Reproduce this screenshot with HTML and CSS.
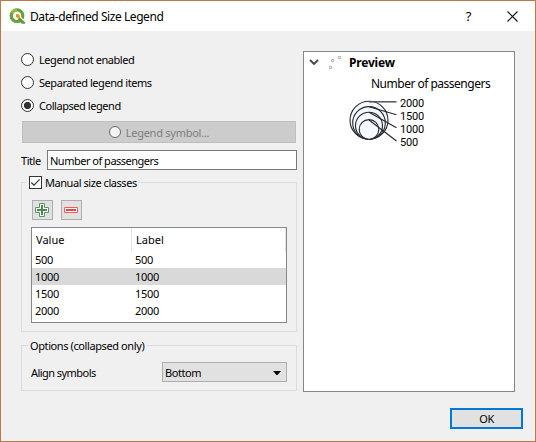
FILE: index.html
```html
<!DOCTYPE html>
<html lang="en">
<head>
<meta charset="utf-8">
<title>Data-defined Size Legend</title>
<link rel="stylesheet" href="styles.css">
</head>
<body>
<div class="dialog">
  <header class="titlebar">
    <svg class="logo" width="17" height="17" viewBox="0 0 17 17">
      <circle cx="8" cy="7.7" r="5.8" fill="none" stroke="#64a338" stroke-width="3.2"/>
      <path d="M3 4.8A5.8 5.8 0 0 1 8 1.9" fill="none" stroke="#8fbd45" stroke-width="2.6"/>
      <path d="M7 6.3h3l1.5 2 4.8 5v2.5h-3L7.6 9.5z" fill="#fff"/>
      <path d="M10 8.8l6 5.4v1.6h-3.2L9 11.4z" fill="#5c9d39"/>
      <path d="M7 6.2h3.2l.6 2.8-2 1.2L7 9z" fill="#ef8a2b"/>
    </svg>
    <h1 class="caption">Data-defined Size Legend</h1>
    <span class="help">?</span>
    <svg class="close" width="11" height="11" viewBox="0 0 11 11"><path d="M.5.5l10 10M10.500 .5l-10 10" stroke="#111" stroke-width="1.1"/></svg>
  </header>
  <main class="content">
    <section class="settings">
      <div class="radios">
        <label class="radio"><i class="dot"></i><span>Legend not enabled</span></label>
        <label class="radio"><i class="dot"></i><span>Separated legend items</span></label>
        <label class="radio"><i class="dot on"></i><span>Collapsed legend</span></label>
      </div>
      <div class="symbol-button"><i class="marker"></i><span>Legend symbol...</span></div>
      <div class="title-row"><span class="title-label">Title</span><div class="input">Number of passengers</div></div>
      <div class="group classes">
        <div class="legend"><span class="check"><svg width="11" height="11" viewBox="0 0 11 11"><path d="M1.300 5.500l2.700 2.700 5.600-5.900" fill="none" stroke="#333" stroke-width="1.2"/></svg></span><span>Manual size classes</span></div>
        <div class="tools">
          <div class="tool"><svg width="14" height="14" viewBox="0 0 14 14"><path d="M4.500 .5h5v4h4v5h-4v4h-5v-4h-4v-5h4z" fill="#fff" stroke="#5b9461"/><path d="M6 2h2v4h4v2H8v4H6V8H2V6h4z" fill="#4d8b55"/></svg></div>
          <div class="tool"><svg width="14" height="14" viewBox="0 0 14 14"><path d="M.5 4.500h13v5H.5z" fill="#fff" stroke="#ee5e5c"/><path d="M2 6h10v2H2z" fill="#e74745"/></svg></div>
        </div>
        <div class="table">
          <div class="row head"><span>Value</span><span>Label</span></div>
          <div class="row"><span>500</span><span>500</span></div>
          <div class="row selected"><span>1000</span><span>1000</span></div>
          <div class="row"><span>1500</span><span>1500</span></div>
          <div class="row"><span>2000</span><span>2000</span></div>
        </div>
      </div>
      <div class="group options">
        <div class="legend">Options (collapsed only)</div>
        <div class="align"><span class="align-label">Align symbols</span><div class="combo"><span>Bottom</span><svg width="8" height="4" viewBox="0 0 8 4"><path d="M0 0h8L4.500 4h-1z" fill="#000"/></svg></div></div>
      </div>
    </section>
    <section class="preview">
      <div class="node">
        <svg class="chevron" width="10" height="7" viewBox="0 0 10 7"><path d="M1 1l4 4 4-4" fill="none" stroke="#444" stroke-width="1.800"/></svg>
        <svg class="points" width="14" height="14" viewBox="0 0 14 14"><g fill="#fff" stroke="#888" stroke-width=".8"><circle cx="1.500" cy="11.500" r="1.200"/><circle cx="3.500" cy="4.500" r="1.200"/><circle cx="10.500" cy="1.500" r="1.200"/></g></svg>
        <strong class="preview-title">Preview</strong>
      </div>
      <div class="heading">Number of passengers</div>
      <div class="sizes">
        <svg width="49" height="44" viewBox="0 0 49 44">
          <g fill="#f5f9ff" stroke="#24282c" stroke-width="1.100">
            <circle cx="20" cy="22.200" r="19"/><circle cx="20" cy="24.900" r="16.300"/><circle cx="20" cy="27.700" r="13.500"/><circle cx="20" cy="31.400" r="9.800"/>
          </g>
          <path d="M20 3.800h27.500" stroke="#555" stroke-width="1.500"/>
          <path d="M20 8.800l27.500 8M20 14.200l27.500 15.500M20 22l27.500 21" fill="none" stroke="#24282c" stroke-width="1.100"/>
        </svg>
        <div class="size-labels"><span>2000</span><span>1500</span><span>1000</span><span>500</span></div>
      </div>
    </section>
  </main>
  <footer class="footer"><div class="ok">OK</div></footer>
</div>
</body>
</html>
```

FILE: styles.css
```css
* { box-sizing: border-box; }
body { margin: 0; font: 11px/15px "Noto Sans", "Open Sans", sans-serif; color: #000; letter-spacing: -0.45px; white-space: nowrap; }
svg { display: block; flex: none; }
.dialog { width: 536px; height: 442px; border: 1px solid #bd7a48; background: #f0f0f0; display: flex; flex-direction: column; }
.titlebar { height: 30px; background: #fff; display: flex; align-items: center; padding: 0 17px 0 8px; flex: none; }
.caption { margin: 0 auto 0 4px; font-size: 12px; font-weight: 400; letter-spacing: -0.43px; }
.help { font-size: 13px; margin-right: 36px; }
.content { display: flex; padding: 20px 20px 0; gap: 6px; height: 361px; flex: none; }
.settings { width: 276px; }
.radios { display: flex; flex-direction: column; gap: 8px; padding-top: 1px; }
.radio { display: flex; align-items: center; gap: 5px; height: 15px; }
.dot { width: 13px; height: 13px; border: 1px solid #333; border-radius: 50%; background: #fff; }
.dot.on { background: radial-gradient(circle, #333 3.2px, #fff 4px); }
.symbol-button { margin: 8px 1px 0; height: 22px; background: #ccc; border: 1px solid #bfbfbf; color: #7d7d82; display: flex; align-items: center; justify-content: center; gap: 5px; letter-spacing: -0.25px; }
.marker { width: 12px; height: 12px; border: 1px solid #666; border-radius: 50%; background: #f5f5f5; }
.title-row { display: flex; align-items: center; margin-top: 7px; height: 20px; }
.title-label { width: 26px; }
.input { flex: 1; height: 20px; border: 1px solid #7a7a7a; background: #fff; padding: 2px 0 0 2px; letter-spacing: -0.5px; }
.group { border: 1px solid #dcdcdc; padding: 0 9px; }
.legend { display: flex; align-items: center; height: 15px; width: max-content; background: #f0f0f0; margin-top: -8px; }
.classes { margin-top: 12px; height: 150px; }
.classes .legend { margin-left: -5px; padding: 0 3px; gap: 3px; }
.check { width: 13px; height: 13px; border: 1px solid #333; background: #fff; }
.tools { display: flex; gap: 8px; margin: 10px 0 0 1px; }
.tool { width: 21px; height: 20px; border: 1px solid #adadad; background: #e1e1e1; padding: 2px; }
.table { margin-top: 7px; height: 96px; border: 1px solid #828790; background: #fff; }
.row { display: grid; grid-template-columns: 100px 1fr; height: 17px; line-height: 17px; letter-spacing: -0.3px; }
.row span { padding-left: 3px; }
.row.head { height: 23px; line-height: 24px; letter-spacing: 0; }
.row.head span { border-right: 1px solid #e5e5e5; padding-left: 4px; }
.selected { background: #d9d9d9; }
.options { margin-top: 13px; height: 46px; }
.options .legend { margin-left: -3px; padding: 0 3px 0 2px; letter-spacing: -0.4px; }
.align { display: flex; align-items: center; justify-content: space-between; margin-top: 9px; height: 20px; }
.align-label { letter-spacing: -0.55px; }
.combo { width: 125px; height: 20px; border: 1px solid #adadad; background: #e1e1e1; display: flex; align-items: center; justify-content: space-between; padding: 1px 5px 0 2px; }
.preview { width: 212px; height: 341px; border: 1px solid #828790; background: #fff; }
.node { display: flex; align-items: center; height: 21px; padding-left: 5px; }
.points { margin: 0 0 0 10px; }
.preview-title { font-size: 12px; margin-left: 6px; letter-spacing: -0.2px; }
.heading { font-size: 12px; margin: 3px 0 0 67px; letter-spacing: -0.5px; }
.sizes { display: flex; margin: 7px 0 0 45px; }
.size-labels { display: grid; grid-auto-rows: 13px; height: 52px; margin: -1px 0 0 2px; font-family: Roboto, sans-serif; font-size: 11px; line-height: 13px; letter-spacing: -0.2px; }
.footer { display: flex; justify-content: flex-end; padding: 16px 12px 0 0; }
.ok { width: 73px; height: 21px; border: 2px solid #0078d7; background: #e1e1e1; text-align: center; line-height: 18px; }
```
